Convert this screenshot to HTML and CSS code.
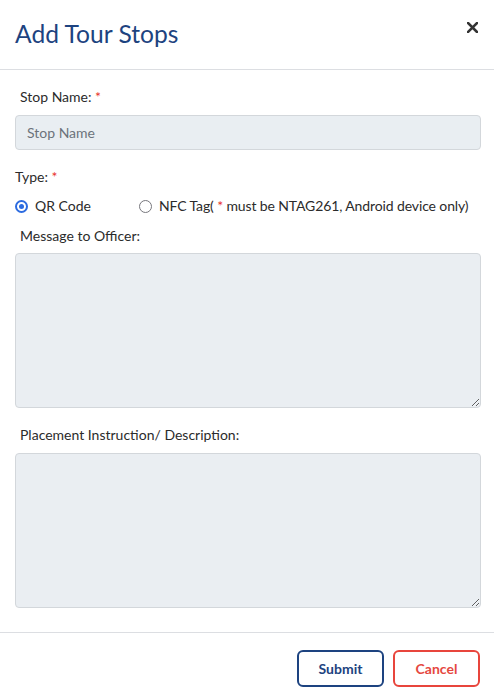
FILE: index.html
```html
<!DOCTYPE html>
<html lang="en">
<head>
<meta charset="utf-8">
<title>Add Tour Stops</title>
<link rel="stylesheet" href="styles.css">
</head>
<body>
<div class="modal">
  <div class="modal-header">
    <h1 class="modal-title">Add Tour Stops</h1>
    <button class="close" aria-label="Close">
      <svg width="11" height="11" viewBox="0 0 11 11"><path d="M1 1 L10 10 M10 1 L1 10" stroke="#333" stroke-width="2.5" stroke-linecap="square"/></svg>
    </button>
  </div>
  <div class="modal-body">
    <label class="label first">Stop Name: <span class="req">*</span></label>
    <input class="input" type="text" placeholder="Stop Name">
    <div class="label type">Type: <span class="req">*</span></div>
    <div class="radios">
      <label class="radio"><span class="dot checked"></span><span>QR Code</span></label>
      <label class="radio nfc"><span class="dot"></span><span class="nfc-text">NFC Tag( <span class="req">*</span> must be NTAG261, Android device only)</span></label>
    </div>
    <label class="label msg">Message to Officer:</label>
    <textarea class="textarea"></textarea>
    <label class="label place">Placement Instruction/ Description:</label>
    <textarea class="textarea last"></textarea>
  </div>
  <div class="modal-footer">
    <button class="btn submit">Submit</button>
    <button class="btn cancel">Cancel</button>
  </div>
</div>
</body>
</html>
```
FILE: styles.css
```css
* { box-sizing: border-box; }
html, body { margin: 0; padding: 0; background: #fff; }
body { font-family: Lato, "Open Sans", sans-serif; color: #333; font-size: 14px; }
.modal { width: 494px; height: 700px; display: flex; flex-direction: column; }
.modal-header {
  height: 70px;
  border-bottom: 1px solid #dcdee2;
  display: flex;
  justify-content: space-between;
  align-items: flex-start;
  padding: 0 15px;
}
.modal-title {
  margin: 0;
  margin-top: 19px;
  font-size: 24.6px;
  line-height: 30px;
  font-weight: 400;
  color: #1d4380;
}
.close {
  margin-top: 22px;
  margin-right: 1px;
  border: 0;
  background: none;
  padding: 0;
  width: 11px;
  height: 11px;
  display: flex;
}
.modal-body { padding: 0 13px 0 15px; display: flex; flex-direction: column; }
.label { display: block; line-height: 20px; font-size: 14px; color: #2b2b2b; padding-left: 5px; }
.label.first { margin-top: 17px; }
.label.type { margin-top: 17px; padding-left: 0; }
.label.msg { margin-top: 10px; }
.label.place { margin-top: 17px; }
.req { color: #e8322c; }
.input {
  margin-top: 8px;
  height: 35px;
  width: 466px;
  border: 1px solid #d3d7db;
  border-radius: 4px;
  background: #e9eef2;
  padding: 0 11px;
  font-family: inherit;
  font-size: 14px;
  color: #333;
}
.input::placeholder { color: #6c737b; }
.radios { margin-top: 9px; display: flex; height: 20px; align-items: center; }
.radio { display: flex; align-items: center; line-height: 20px; font-size: 14px; color: #2b2b2b; }
.radio.nfc { margin-left: 48px; }
.nfc-text { letter-spacing: -0.12px; }
.dot {
  width: 13px;
  height: 13px;
  border-radius: 50%;
  border: 1.8px solid #77777d;
  margin-right: 7px;
  display: inline-block;
  position: relative;
  flex: none;
}
.dot.checked { border: 2px solid #2c6be0; }
.dot.checked::after {
  content: "";
  position: absolute;
  left: 2px; top: 2px;
  width: 5px; height: 5px;
  border-radius: 50%;
  background: #2c6be0;
}
.textarea {
  margin-top: 7px;
  width: 466px;
  height: 155px;
  border: 1px solid #d3d7db;
  border-radius: 4px;
  background: #eaeef2;
  font-family: inherit;
  font-size: 14px;
}
.textarea.last { margin-top: 8px; }
.modal-footer {
  margin-top: 24px;
  border-top: 1px solid #dcdee2;
  padding: 17px 14px 0 0;
  display: flex;
  justify-content: flex-end;
  gap: 9px;
}
.btn {
  width: 87px;
  height: 37px;
  border-radius: 6px;
  background: #fff;
  font-family: inherit;
  font-size: 14px;
  font-weight: 700;
}
.submit { border: 2px solid #1d4380; color: #1d4380; }
.cancel { border: 2px solid #e8453c; color: #e5483f; }
```
